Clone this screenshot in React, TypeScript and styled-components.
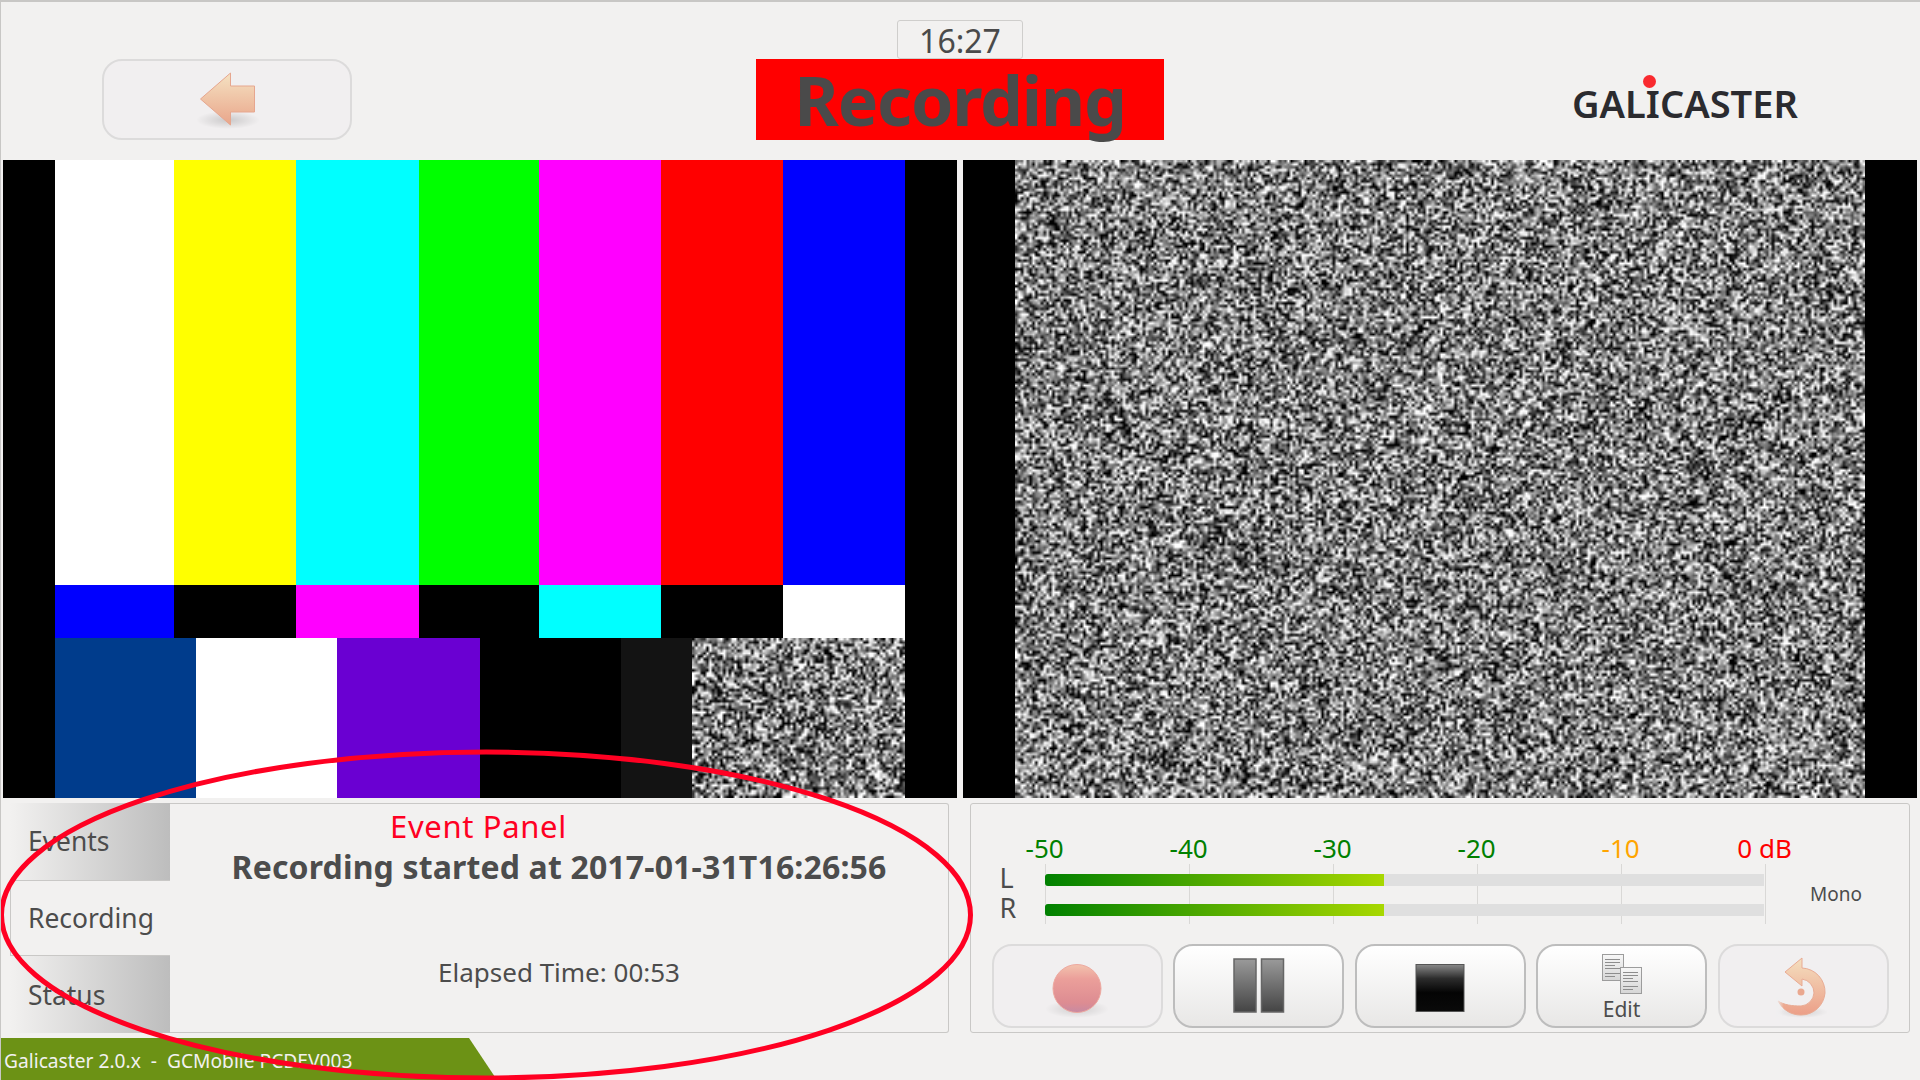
import { useEffect, useRef } from "react";
import styled, { createGlobalStyle } from "styled-components";

const UI_FONT = `"Noto Sans", "Open Sans", sans-serif`;

const GlobalStyle = createGlobalStyle`
  html, body {
    margin: 0;
    padding: 0;
    background: #f2f1f0;
    font-family: ${UI_FONT};
    color: #4c4c4c;
  }
`;

// tiny seeded generator so the static looks the same on every load
function drawStatic(canvas: HTMLCanvasElement, seed: number) {
  const ctx = canvas.getContext("2d");
  if (!ctx) return;
  const { width, height } = canvas;
  const image = ctx.createImageData(width, height);
  let s = seed;
  for (let i = 0; i < image.data.length; i += 4) {
    s = (s * 1664525 + 1013904223) >>> 0;
    const r = (s >>> 8) / 16777216;
    s = (s * 1664525 + 1013904223) >>> 0;
    const r2 = (s >>> 8) / 16777216;
    const v = Math.min(255, Math.max(0, 125 + (r + r2 - 1) * 250));
    image.data[i] = v;
    image.data[i + 1] = v;
    image.data[i + 2] = v;
    image.data[i + 3] = 255;
  }
  ctx.putImageData(image, 0, 0);
}

function Static({ w, h, seed }: { w: number; h: number; seed: number }) {
  const ref = useRef<HTMLCanvasElement>(null);
  useEffect(() => {
    if (ref.current) drawStatic(ref.current, seed);
  }, [seed]);
  return <NoiseCanvas ref={ref} width={w} height={h} />;
}

function BackIcon() {
  return (
    <svg width="70" height="62" viewBox="0 0 70 62">
      <defs>
        <linearGradient id="backFill" x1="0" y1="0" x2="0" y2="1">
          <stop offset="0" stopColor="#f5e2c2" />
          <stop offset="1" stopColor="#e9a58a" />
        </linearGradient>
        <radialGradient id="backShadow">
          <stop offset="0" stopColor="#000" stopOpacity="0.16" />
          <stop offset="1" stopColor="#000" stopOpacity="0" />
        </radialGradient>
      </defs>
      <ellipse cx="36" cy="51" rx="32" ry="9" fill="url(#backShadow)" />
      <path
        d="M8.5 30 L38.5 4 V17 H62.5 V43 H38.5 V56 Z"
        fill="url(#backFill)"
        stroke="#e6a68f"
        strokeWidth="1"
      />
    </svg>
  );
}

function RecordIcon() {
  return (
    <svg width="80" height="70" viewBox="0 0 80 70">
      <defs>
        <linearGradient id="recFill" x1="0" y1="0" x2="0" y2="1">
          <stop offset="0" stopColor="#f3c3ae" />
          <stop offset="0.3" stopColor="#eb9f9a" />
          <stop offset="0.8" stopColor="#dd8c92" />
          <stop offset="1" stopColor="#c88aa2" />
        </linearGradient>
        <radialGradient id="recShadow">
          <stop offset="0" stopColor="#000" stopOpacity="0.14" />
          <stop offset="1" stopColor="#000" stopOpacity="0" />
        </radialGradient>
      </defs>
      <ellipse cx="40" cy="58" rx="32" ry="9" fill="url(#recShadow)" />
      <circle cx="40" cy="37.5" r="24" fill="url(#recFill)" stroke="#eda9a0" strokeWidth="1" />
    </svg>
  );
}

function PauseIcon() {
  return (
    <svg width="52" height="56" viewBox="0 0 52 56">
      <defs>
        <linearGradient id="pauseFill" x1="0" y1="0" x2="0" y2="1">
          <stop offset="0" stopColor="#9a9a9a" />
          <stop offset="1" stopColor="#444" />
        </linearGradient>
      </defs>
      <rect x="1" y="1" width="22" height="53" fill="url(#pauseFill)" stroke="#666" strokeWidth="1.5" />
      <rect x="28.5" y="1" width="22" height="53" fill="url(#pauseFill)" stroke="#666" strokeWidth="1.5" />
    </svg>
  );
}

function StopIcon() {
  return (
    <svg width="50" height="54" viewBox="0 0 50 54">
      <defs>
        <linearGradient id="stopFill" x1="0" y1="0" x2="0" y2="1">
          <stop offset="0" stopColor="#8a8a8a" />
          <stop offset="0.3" stopColor="#2c2c2c" />
          <stop offset="0.6" stopColor="#040404" />
          <stop offset="1" stopColor="#0a0a0a" />
        </linearGradient>
      </defs>
      <rect x="1" y="5.5" width="48" height="47" fill="url(#stopFill)" stroke="#555" strokeWidth="1" />
    </svg>
  );
}

function Sheet({ x, y }: { x: number; y: number }) {
  const lines = [5, 8, 11, 14, 19, 22];
  return (
    <g transform={`translate(${x} ${y})`}>
      <rect x="0.5" y="0.5" width="21" height="26" fill="url(#sheetFill)" stroke="#9c9c9c" />
      {lines.map((ly, i) => (
        <rect key={ly} x="3" y={ly} width={i % 3 === 2 ? 10 : 15} height="1" fill="#8d8d8d" />
      ))}
    </g>
  );
}

function EditIcon() {
  return (
    <svg width="42" height="42" viewBox="0 0 42 42">
      <defs>
        <linearGradient id="sheetFill" x1="0" y1="0" x2="0" y2="1">
          <stop offset="0" stopColor="#f7f7f7" />
          <stop offset="1" stopColor="#d6d6d6" />
        </linearGradient>
      </defs>
      <Sheet x={1} y={1} />
      <Sheet x={19} y={14} />
    </svg>
  );
}

function UndoIcon() {
  return (
    <svg width="54" height="64" viewBox="0 -3 54 64">
      <defs>
        <linearGradient id="undoFill" x1="0" y1="0" x2="0" y2="1">
          <stop offset="0" stopColor="#f4dfbf" />
          <stop offset="1" stopColor="#ec9f88" />
        </linearGradient>
        <linearGradient id="undoFade" x1="0" y1="0" x2="1" y2="0">
          <stop offset="0" stopColor="#f0eff0" />
          <stop offset="0.35" stopColor="#f0eff0" stopOpacity="0" />
        </linearGradient>
        <radialGradient id="undoShadow">
          <stop offset="0" stopColor="#000" stopOpacity="0.13" />
          <stop offset="1" stopColor="#000" stopOpacity="0" />
        </radialGradient>
      </defs>
      <ellipse cx="26" cy="55" rx="26" ry="6" fill="url(#undoShadow)" />
      <path
        d="M26 1 L9 15 L26 29 V22 A14 14 0 0 1 38 36 A14 14 0 0 1 25 49 C16 49 8 48 2 44 C7 53 15 58 25 58 A24 24 0 0 0 49 36 A24 24 0 0 0 26 11 Z"
        fill="url(#undoFill)"
        stroke="#e9ab93"
        strokeWidth="1"
      />
      <path d="M0 40 H22 V60 H0 Z" fill="url(#undoFade)" />
      <circle cx="25" cy="35" r="3.5" fill="#eaa88f" />
    </svg>
  );
}

const scale = [
  { label: "-50", color: "#008000" },
  { label: "-40", color: "#008000" },
  { label: "-30", color: "#008000" },
  { label: "-20", color: "#008000" },
  { label: "-10", color: "#ffa500" },
  { label: "0 dB", color: "#ff0000" },
];

const topBars = ["#fff", "#ff0", "#0ff", "#0f0", "#f0f", "#f00", "#00f"];
const midBars = ["#00f", "#000", "#f0f", "#000", "#0ff", "#000", "#fff"];

export default function App() {
  return (
    <Screen>
      <GlobalStyle />
      <Header>
        <BackSlot>
          <ActionButton $disabled $wide>
            <BackIcon />
          </ActionButton>
        </BackSlot>
        <StatusStack>
          <Clock>16:27</Clock>
          <RecordingBanner>Recording</RecordingBanner>
        </StatusStack>
        <LogoSlot>
          <Logo>
            GALICASTER
            <LogoDot />
          </Logo>
        </LogoSlot>
      </Header>

      <Videos>
        <Video>
          <PillarBox>
            <TopBars>
              {topBars.map((c, i) => (
                <Bar key={i} $color={c} />
              ))}
            </TopBars>
            <MidBars>
              {midBars.map((c, i) => (
                <Bar key={i} $color={c} />
              ))}
            </MidBars>
            <BottomBars>
              <Bar $color="#003c8c" />
              <Bar $color="#fff" />
              <Bar $color="#6a00d2" />
              <Bar $color="#000" />
              <Bar $color="#131313" />
              <NoiseCell>
                <Static w={76} h={57} seed={77} />
              </NoiseCell>
            </BottomBars>
          </PillarBox>
        </Video>
        <Video>
          <PillarBox>
            <Static w={300} h={225} seed={4242} />
          </PillarBox>
        </Video>
      </Videos>

      <Panels>
        <EventPanel>
          <Tabs>
            <Tab>Events</Tab>
            <Tab $active>Recording</Tab>
            <Tab>Status</Tab>
          </Tabs>
          <EventBody>
            <EventAnnotation>Event Panel</EventAnnotation>
            <StartedText>Recording started at 2017-01-31T16:26:56</StartedText>
            <ElapsedText>Elapsed Time: 00:53</ElapsedText>
          </EventBody>
        </EventPanel>

        <ControlPanel>
          <MeterRow>
            <ChannelLabels>
              <span>L</span>
              <span>R</span>
            </ChannelLabels>
            <Meter>
              <ScaleLabels>
                {scale.map((s) => (
                  <ScaleLabel key={s.label} $color={s.color}>
                    {s.label}
                  </ScaleLabel>
                ))}
              </ScaleLabels>
              <MeterBars>
                <Ticks>
                  {scale.map((s) => (
                    <Tick key={s.label} />
                  ))}
                </Ticks>
                <Track>
                  <Level />
                </Track>
                <Track>
                  <Level />
                </Track>
              </MeterBars>
            </Meter>
            <Mono>Mono</Mono>
          </MeterRow>
          <ButtonRow>
            <ActionButton $disabled>
              <RecordIcon />
            </ActionButton>
            <ActionButton>
              <PauseIcon />
            </ActionButton>
            <ActionButton>
              <StopIcon />
            </ActionButton>
            <ActionButton>
              <EditIcon />
              <EditLabel>Edit</EditLabel>
            </ActionButton>
            <ActionButton $disabled>
              <UndoIcon />
            </ActionButton>
          </ButtonRow>
        </ControlPanel>
      </Panels>

      <Footer>
        <FooterTag>Galicaster 2.0.x&nbsp; - &nbsp;GCMobile PCDEV003</FooterTag>
      </Footer>

      <RedCircle viewBox="0 0 1920 1080">
        <ellipse cx="486" cy="915" rx="484.5" ry="163" fill="none" stroke="#ff0022" strokeWidth="5" />
      </RedCircle>
    </Screen>
  );
}

const Screen = styled.div`
  position: relative;
  width: 1920px;
  height: 1080px;
  box-sizing: border-box;
  border-top: 2px solid #c8c7c5;
  border-left: 1px solid #c8c7c5;
  background: #f2f1f0;
  overflow: hidden;
`;

const Header = styled.header`
  display: grid;
  grid-template-columns: 755px 408px 1fr;
  height: 158px;
`;

const BackSlot = styled.div`
  padding: 57px 0 0 101px;
`;

const StatusStack = styled.div`
  display: flex;
  flex-direction: column;
  align-items: center;
  padding-top: 18px;
`;

const Clock = styled.div`
  box-sizing: border-box;
  width: 126px;
  height: 39px;
  border: 1px solid #cfcecc;
  border-radius: 3px;
  font-size: 32px;
  line-height: 39px;
  text-align: center;
  color: #4a4a4a;
`;

const RecordingBanner = styled.div`
  width: 100%;
  height: 81px;
  background: #ff0000;
  color: #4a4a4a;
  font-size: 68px;
  font-weight: 700;
  letter-spacing: -1.2px;
  line-height: 81px;
  text-align: center;
`;

const LogoSlot = styled.div`
  padding: 79px 0 0 408px;
`;

const Logo = styled.div`
  position: relative;
  width: 226px;
  font-size: 38px;
  font-weight: 600;
  line-height: 44px;
  color: #2b2b2f;
  white-space: nowrap;
`;

const LogoDot = styled.span`
  position: absolute;
  left: 71px;
  top: -6px;
  width: 13px;
  height: 13px;
  border-radius: 50%;
  background: #f92a2f;
`;

const Videos = styled.div`
  display: flex;
  gap: 6px;
  height: 638px;
  padding-left: 2px;
`;

const Video = styled.div`
  width: 954px;
  height: 100%;
  background: #000;
  padding: 0 52px;
  box-sizing: border-box;
`;

const PillarBox = styled.div`
  display: flex;
  flex-direction: column;
  height: 100%;
`;

const TopBars = styled.div`
  display: grid;
  grid-template-columns: 119px 122px 123px 120px 122px 122px 122px;
  height: 425px;
`;

const MidBars = styled(TopBars)`
  height: 53px;
`;

const BottomBars = styled.div`
  display: grid;
  grid-template-columns: 141px 141px 143px 141px 71px 1fr;
  height: 160px;
`;

const Bar = styled.div<{ $color: string }>`
  background: ${(p) => p.$color};
`;

const NoiseCell = styled.div`
  overflow: hidden;
  min-width: 0;
`;

const NoiseCanvas = styled.canvas`
  display: block;
  width: 100%;
  height: 100%;
`;

const Panels = styled.div`
  display: grid;
  grid-template-columns: 948px 940px;
  gap: 21px;
  height: 230px;
  margin-top: 5px;
`;

const EventPanel = styled.section`
  display: grid;
  grid-template-columns: 160px 1fr;
  margin-left: 9px;
  width: 939px;
  box-sizing: border-box;
  border: 1px solid #c9c8c6;
  border-left: none;
  border-radius: 0 3px 3px 0;
`;

const Tabs = styled.div`
  display: grid;
  grid-template-rows: repeat(3, 1fr);
  margin: -1px 0;
`;

const Tab = styled.div<{ $active?: boolean }>`
  display: flex;
  align-items: center;
  padding-left: ${(p) => (p.$active ? "17px" : "18px")};
  font-size: 26.4px;
  color: #4c4c4c;
  background: ${(p) =>
    p.$active ? "#f2f1f0" : "linear-gradient(to right, #f2f1f0, #bdbdbd)"};
  border-left: ${(p) => (p.$active ? "1px solid #c9c8c6" : "none")};
  border-top: ${(p) => (p.$active ? "1px solid #c9c8c6" : "none")};
  border-bottom: ${(p) => (p.$active ? "1px solid #c9c8c6" : "none")};
`;

const EventBody = styled.div`
  position: relative;
  display: flex;
  flex-direction: column;
  align-items: center;
`;

const EventAnnotation = styled.div`
  position: absolute;
  left: 220px;
  top: 2px;
  font-size: 31px;
  letter-spacing: 0.65px;
  line-height: 40px;
  color: #ff0022;
`;

const StartedText = styled.div`
  margin-top: 43px;
  font-size: 32px;
  font-weight: 700;
  letter-spacing: 0.15px;
  line-height: 40px;
  color: #4c4c4c;
`;

const ElapsedText = styled.div`
  margin-top: 67px;
  font-size: 26px;
  line-height: 36px;
`;

const ControlPanel = styled.section`
  box-sizing: border-box;
  border: 1px solid #c9c8c6;
  border-radius: 3px;
  padding: 0 19px 0 20.5px;
`;

const MeterRow = styled.div`
  display: flex;
  height: 140px;
  padding-top: 28px;
  box-sizing: border-box;
`;

const ChannelLabels = styled.div`
  display: flex;
  flex-direction: column;
  width: 53.5px;
  padding: 31px 0 0 8px;
  box-sizing: border-box;
  font-size: 27px;
  line-height: 30px;
`;

const Meter = styled.div`
  width: 721px;
`;

const ScaleLabels = styled.div`
  display: grid;
  grid-template-columns: repeat(6, 144px);
  height: 32px;
  margin-left: -72.4px;
`;

const ScaleLabel = styled.span<{ $color: string }>`
  font-size: 26px;
  line-height: 32px;
  text-align: center;
  color: ${(p) => p.$color};
  white-space: nowrap;
`;

const MeterBars = styled.div`
  position: relative;
  display: flex;
  flex-direction: column;
  gap: 18px;
  padding-top: 10px;
  height: 60px;
  box-sizing: border-box;
`;

const Ticks = styled.div`
  position: absolute;
  inset: 0;
  display: flex;
  justify-content: space-between;
`;

const Tick = styled.span`
  width: 1px;
  background: #d9d8d6;
`;

const Track = styled.div`
  position: relative;
  width: 719px;
  height: 12px;
  background: #dfdfdf;
`;

const Level = styled.div`
  width: 339px;
  height: 100%;
  border-radius: 3px 0 0 3px;
  background: linear-gradient(to right, #008000, #a8d800);
`;

const Mono = styled.div`
  margin: 48px 0 0 44px;
  font-size: 19px;
  line-height: 28px;
`;

const ButtonRow = styled.div`
  display: grid;
  grid-template-columns: repeat(5, 171px);
  column-gap: 10.5px;
`;

const ActionButton = styled.button<{ $disabled?: boolean; $wide?: boolean }>`
  display: flex;
  flex-direction: column;
  align-items: center;
  justify-content: center;
  width: ${(p) => (p.$wide ? "250px" : "171px")};
  height: ${(p) => (p.$wide ? "81px" : "84px")};
  padding: 0;
  box-sizing: border-box;
  border-radius: 20px;
  font-family: ${UI_FONT};
  border: 2px solid ${(p) => (p.$disabled ? "#dcdbdb" : "#bdbdbd")};
  background: ${(p) =>
    p.$disabled ? "#f1eff0" : "linear-gradient(to bottom, #ffffff, #e8e7e6)"};
`;

const EditLabel = styled.span`
  margin-bottom: -3px;
  padding-top: 1px;
  font-size: 21px;
  line-height: 26px;
  color: #4c4c4c;
`;

const Footer = styled.footer`
  margin-top: 5px;
`;

const FooterTag = styled.div`
  box-sizing: border-box;
  width: 497px;
  height: 42px;
  margin-left: -1px;
  padding-left: 4px;
  background: #6c9215;
  clip-path: polygon(0 0, 469px 0, 100% 100%, 0 100%);
  color: #f2f1f0;
  font-size: 19.2px;
  line-height: 45px;
  white-space: nowrap;
`;

const RedCircle = styled.svg`
  position: absolute;
  left: -1px;
  top: -2px;
  width: 1920px;
  height: 1080px;
  pointer-events: none;
`;
